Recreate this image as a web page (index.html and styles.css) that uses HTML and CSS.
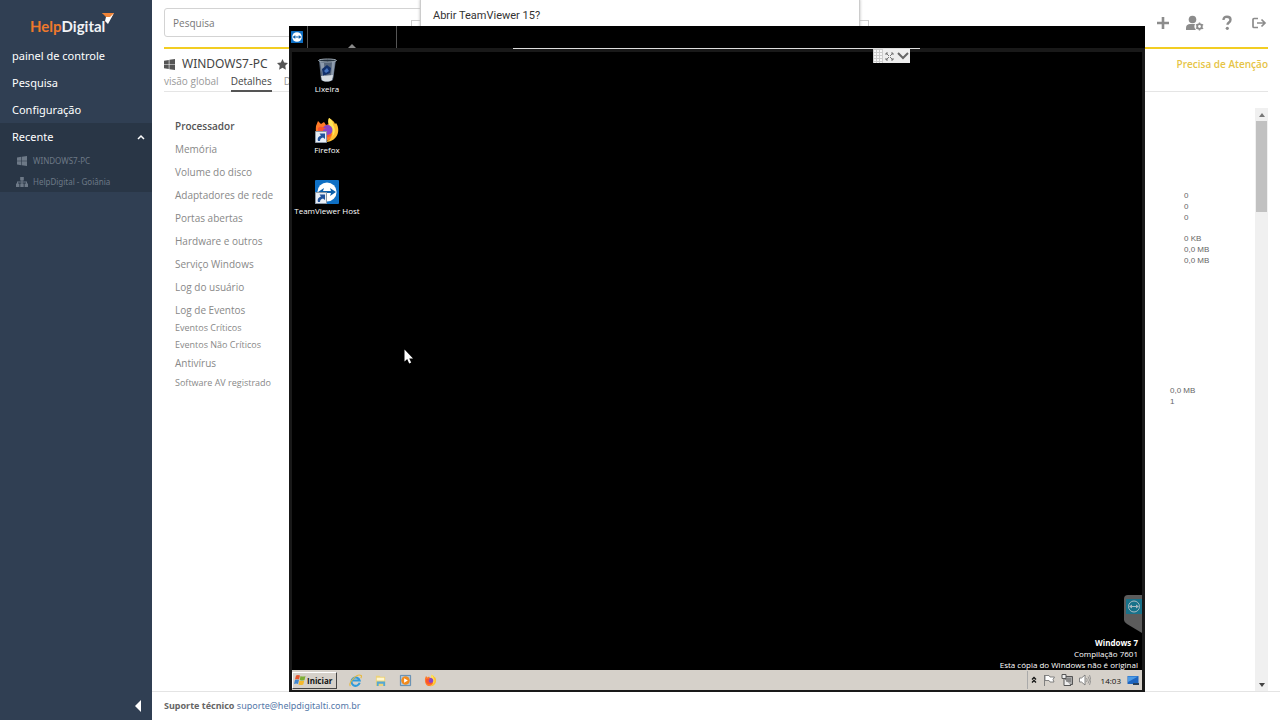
FILE: index.html
```html
<!DOCTYPE html>
<html lang="pt-BR">
<head>
<meta charset="utf-8">
<title>HelpDigital - WINDOWS7-PC</title>
<link rel="stylesheet" href="styles.css">
</head>
<body>
<svg class="defs" aria-hidden="true">
  <symbol id="win" viewBox="0 0 12 12"><path d="M0 1.8 5.2 1v4.7H0zM5.9.9 12 0v5.7H5.9zM0 6.4h5.2V11L0 10.2zM5.9 6.4H12V12l-6.1-.9z"/></symbol>
  <symbol id="tv" viewBox="0 0 24 24"><rect width="24" height="24" rx="1" fill="#0e6fc4"/><circle cx="12" cy="12" r="9.6" fill="#fff"/><path d="m3 12 6-4-1 3h8l-1-3 6 4-6 4 1-3H8l1 3z" fill="#0c5faa"/></symbol>
  <symbol id="firefox" viewBox="0 0 24 24"><path d="M1 8 3 3l3 3 3-2 2 3 3-1c3 2 6 5 5 9-2 6-7 9-11 8C3 22 0 16 1 8z" fill="#ff7a27"/><path d="M14 0c3 2 5 3 6 6l1-1c3 4 3 10 0 14-3 4-7 5-11 5 6-2 8-7 6-12-1-4-4-7-2-12z" fill="#ffbf32"/><path d="M14 0c3 2 4 4 4 7 3 4 2 9-1 12 3-6-2-9-3-12-1-2-1-5 0-7z" fill="#ffe55a"/><circle cx="12.500" cy="12" r="5" fill="#8a45c8"/><path d="M3 10c3-3 5 0 8 0l-3 2c0 5 5 6 9 4-3 5-12 5-14-1z" fill="#f9532f"/></symbol>
  <symbol id="shortcut" viewBox="0 0 12 12"><path d="M.5.500h11v11H.500z" fill="#e8eef5" stroke="#8c98a5"/><path d="M3 10c-1-3 1-5 3-5.500L4.500 2.500H10V8L8 6.500C6 7 5 8 5 10z" fill="#21539c"/></symbol>
</svg>
<div class="app">
  <aside class="sidebar">
    <div class="logo"><span class="logo-help">Help</span><span>Digital</span><svg class="logo-mark" viewBox="0 0 12 11"><path d="M0 0h12L9 5 4 4z" fill="#f08437"/><path d="m12 0-6 11-3-3 1-4 4 0z" fill="#fff"/><path d="M0 0h12L7 4z" fill="#f08437"/></svg></div>
    <nav class="nav">
      <a href="#">painel de controle</a>
      <a href="#">Pesquisa</a>
      <a href="#">Configuração</a>
      <div class="recent">
        <button class="recent-toggle" type="button">Recente<svg class="caret" viewBox="0 0 8 6"><path d="m1 5 3-3 3 3" fill="none" stroke="#fff" stroke-width="1.500"/></svg></button>
        <a class="recent-item" href="#"><svg><use href="#win"/></svg>WINDOWS7-PC</a>
        <a class="recent-item" href="#"><svg viewBox="0 0 12 10"><path d="M4.200 0h3.600v3.400H4.200zM0 6.600h3.400V10H0zm4.300 0h3.400V10H4.300zM8.600 6.600H12V10H8.600zM5.500 3h1v4h-1zM1 4.500h10V7h-1V5.500H2V7H1z"/></svg>HelpDigital - Goiânia</a>
      </div>
    </nav>
    <button class="collapse" type="button" aria-label="Recolher menu"><svg viewBox="0 0 6 12"><path d="M6 0v12L0 6z" fill="#fff"/></svg></button>
  </aside>
  <main class="main">
    <div class="page">
      <header class="topbar">
        <input class="search" type="text" placeholder="Pesquisa" aria-label="Pesquisa">
        <div class="tools">
          <button type="button" aria-label="Adicionar"><svg viewBox="0 0 18 16"><path d="M7.700 2h2.600v4.700H15v2.600h-4.700V14H7.700V9.300H3V6.700h4.700z"/></svg></button>
          <button type="button" aria-label="Usuários"><svg viewBox="0 0 18 16"><circle cx="6.500" cy="4.500" r="3.800"/><path d="M0 15v-2c0-3 2-4 4-4h5c-1 2-1 4 1 6z"/><circle cx="13.500" cy="11.500" r="2.300" fill="none" stroke="#8c8c8c" stroke-width="1.800"/><path d="M12.800 7.500h1.400v1.300h-1.400zm0 6.700h1.400v1.300h-1.400zM9.600 10l.7-1.100 1.100.7-.7 1.100zm6 3.600.7-1.100 1.200.7-.7 1.100zM9.600 13l1.100-.7.7 1.100-1.100.7zm6-3.500 1.200-.6.700 1.100-1.200.7z"/></svg></button>
          <button type="button" aria-label="Ajuda"><svg viewBox="0 0 18 16"><path d="M5.500 5C5.500 2.500 7 1.700 9 1.700s3.500 1 3.500 3c0 3-3 2.500-3 5" fill="none" stroke="#8c8c8c" stroke-width="2.400"/><circle cx="9.300" cy="13.300" r="1.600"/></svg></button>
          <button type="button" aria-label="Sair"><svg viewBox="0 0 18 16"><path d="M8 3.500H4q-1 0-1 1v7q0 1 1 1h4M7 8H15M11.500 4.500 15 8l-3.500 3.500" fill="none" stroke="#8c8c8c" stroke-width="1.700"/></svg></button>
        </div>
      </header>
      <section class="title-row">
        <svg><use href="#win"/></svg>
        <h1>WINDOWS7-PC</h1>
        <svg viewBox="0 0 12 12"><path d="m6 0 1.800 3.800 4.200.6-3 3 .7 4.200L6 9.600l-3.700 2 .7-4.200-3-3 4.200-.6z"/></svg>
        <span class="status">Precisa de Atenção</span>
      </section>
      <nav class="tabs"><a href="#">visão global</a><a class="active" href="#">Detalhes</a><a href="#">Disco</a></nav>
      <div class="content">
        <nav class="menu">
          <div class="menu-main">
            <a class="current" href="#">Processador</a><a href="#">Memória</a><a href="#">Volume do disco</a><a href="#">Adaptadores de rede</a><a href="#">Portas abertas</a><a href="#">Hardware e outros</a><a href="#">Serviço Windows</a><a href="#">Log do usuário</a><a href="#">Log de Eventos</a>
          </div>
          <div class="menu-events"><a href="#">Eventos Críticos</a><a href="#">Eventos Não Críticos</a></div>
          <div class="menu-av"><a class="regular" href="#">Antivírus</a><a href="#">Software AV registrado</a></div>
        </nav>
        <div class="values">
          <ul><li>0</li><li>0</li><li>0</li></ul>
          <ul><li>0 KB</li><li>0,0 MB</li><li>0,0 MB</li></ul>
          <ul class="totals"><li>0,0 MB</li><li>1</li></ul>
        </div>
        <div class="scrollbar">
          <button type="button" aria-label="Rolar para cima"><svg viewBox="0 0 6 4"><path d="m0 4 3-4 3 4z"/></svg></button>
          <div class="thumb"></div>
          <button class="down" type="button" aria-label="Rolar para baixo"><svg viewBox="0 0 6 4"><path d="m0 0 3 4 3-4z"/></svg></button>
        </div>
      </div>
    </div>
    <footer class="footer"><strong>Suporte técnico</strong> <a href="#">suporte@helpdigitalti.com.br</a></footer>
  </main>
</div>

<div class="dialog-back"></div>
<div class="dialog" role="dialog" aria-label="Abrir TeamViewer">Abrir TeamViewer 15?</div>

<section class="remote">
  <div class="remote-bar">
    <svg class="remote-logo"><use href="#tv"/></svg>
    <div class="remote-tab"><svg viewBox="0 0 8 4"><path d="m0 4 4-4 4 4z" fill="#8a8a8a"/></svg></div>
    <div class="session">
      <div class="session-tools">
        <svg viewBox="0 0 37 14"><path d="M0 0h10v14H0z" fill="#f6f6f6"/><path d="M1 .5h9M1 3.500h9M1 6.500h9M1 9.500h9M1 12.500h9M.5 0v14M3.500 0v14M6.500 0v14M9.500 0v14" stroke="#ccc"/><path d="m13 4 3 3m4-3-3 3m-4 4 3-3m4 3-3-3M13 6V4h2m3 0h2v2m0 3v2h-2m-3 0h-2V9" stroke="#777" fill="none"/><path d="m25 4 5 5 5-5" stroke="#666" stroke-width="2" fill="none"/></svg>
      </div>
    </div>
  </div>
  <div class="desktop">
    <div class="shortcuts">
      <button type="button"><svg viewBox="0 0 24 26"><path d="m4 3 2 20c3 2 9 2 12 0l3-20z" fill="#566579"/><path d="m5 5 3 16 2-1-1-14zm12 0-1 15 2 1 2-17z" fill="#8e9cae"/><path d="m7 12 5-4 4 3-1 5-7 3z" fill="#12306a"/><path d="m9 14 3-3 2 3-3 2z" fill="#4574c0"/><path d="m6 19 12-1-1 5c-3 2-8 2-10 0z" fill="#d7dde2"/><ellipse cx="12.500" cy="3.500" rx="9" ry="1.500" fill="#26323e" stroke="#9da9b4"/></svg>Lixeira</button>
      <button type="button"><svg viewBox="0 0 24 26"><use href="#firefox" width="24" height="24"/><use href="#shortcut" y="13" width="12" height="12"/></svg>Firefox</button>
      <button type="button"><svg viewBox="0 0 24 26"><use href="#tv" y="1" width="24" height="24"/><use href="#shortcut" y="13" width="12" height="12"/></svg>TeamViewer Host</button>
    </div>
    <svg class="pointer" viewBox="0 0 9 15"><path d="M.5.500v12l2.700-2.500 2 4.500 2-1-2-4H9z" fill="#fff"/></svg>
    <div class="edge">
      <svg class="side-tab" viewBox="0 0 18 38"><path d="M4 0h14v38L3 29q-3-2-3-4V4q0-4 4-4z" fill="#5c5c5c"/><path d="M2 4h16v15H2z" fill="#19728a"/><circle cx="10" cy="11.500" r="5.500" fill="none" stroke="#a9b9c0"/><path d="m5 11.500 3-2v1.500h4V9.500l3 2-3 2V12H8v1.500z" fill="#a9b9c0"/></svg>
      <div class="watermark"><strong>Windows 7</strong><span>Compilação 7601</span><span>Esta cópia do Windows não é original</span></div>
    </div>
  </div>
  <div class="taskbar">
    <button class="start" type="button"><svg viewBox="0 0 12 12"><path d="M2 1.500Q4 .5 6 1.500L5 5.500Q3 4.500 1 5.500z" fill="#e6552b"/><path d="M6.500 2Q9 3 11.500 2l-1 4Q8 7 5.700 6z" fill="#7dae35"/><path d="M1 6Q3 5 5 6l-1 4Q2 9 0 10z" fill="#3f86cf"/><path d="M5.500 6.500Q8 7.500 10.300 6.500l-1 4Q7 11.500 4.500 10.500z" fill="#f4b92b"/></svg>Iniciar</button>
    <div class="quick">
      <button type="button" aria-label="Internet Explorer"><svg viewBox="0 0 14 14"><path d="M11.500 9.500A4.500 4.500 0 1 1 11.500 7H4" fill="none" stroke="#2f9bdb" stroke-width="2.200"/><path d="M1.500 13C-1 10 8-1 13 1.500c1 .7.300 2-.3 3" fill="none" stroke="#e6b93f" stroke-width="1.200"/></svg></button>
      <button type="button" aria-label="Explorador"><svg viewBox="0 0 14 14"><path d="M2 2h4l1 1h5v10H2z" fill="#ecd27a"/><path d="M3 4h8v3H3z" fill="#fff7cf"/><path d="M3 13V8h9v5h-2v-2.500H5V13z" fill="#55a8d4"/></svg></button>
      <button type="button" aria-label="Media Player"><svg viewBox="0 0 14 14"><path d="M1.500 1.500h11v11h-11z" fill="#a9c7df" stroke="#5b87ad"/><circle cx="7" cy="7" r="4.600" fill="#f28a1c"/><path d="m5.500 4.500 4 2.500-4 2.500z" fill="#fff"/></svg></button>
      <button type="button" aria-label="Firefox"><svg viewBox="-1 -1 26 26"><use href="#firefox" width="24" height="24"/></svg></button>
    </div>
    <div class="tray">
      <svg class="tray-chevron" viewBox="0 0 6 8"><path d="m1 3.500 2-2 2 2m-4 3 2-2 2 2" fill="none" stroke="#111" stroke-width="1.300"/></svg>
      <svg viewBox="0 0 12 12"><path d="M1.500 1v11M2 1.500h4l1 1.500h4.500L10 5.500 11 8H7L6 6.500H2z" fill="#fff" stroke="#777" stroke-width=".9"/></svg>
      <svg viewBox="0 0 12 12"><path d="M4 2.500h7.500v8H4z" fill="#aaa" stroke="#555"/><path d="M1 .5h4v4H1zM3 4.500v7h7" fill="#eee" stroke="#555"/><path d="M5 5h5M5 7h5" stroke="#666"/></svg>
      <svg viewBox="0 0 12 12"><path d="M.5 4h2L6 1v10L2.500 8h-2z" fill="#fff" stroke="#777" stroke-width=".9"/><path d="M7.500 4q1.500 2 0 4M9 2.500q3 3.500 0 7M10.500 1q3 5 0 10" fill="none" stroke="#888" stroke-width=".8"/></svg>
      <time>14:03</time>
      <svg viewBox="0 0 12 12"><path d="M.5 2h11v8H.500z" fill="#1d65c0"/><path d="M1 2.500h10L1 8z" fill="#4d9be5"/><path d="M6 9h6v2H6z" fill="#28415c"/></svg>
    </div>
  </div>
</section>
</body>
</html>
```
FILE: styles.css
```css
* { box-sizing: border-box; }
body { margin: 0; min-height: 100vh; position: relative; overflow: hidden; background: #fff; color: #666; font: 10px/15px "Open Sans", "Noto Sans", sans-serif; }
a { color: inherit; text-decoration: none; }
button { margin: 0; padding: 0; border: 0; background: none; color: inherit; font: inherit; }
svg { display: block; flex: none; fill: currentColor; }
ul { margin: 0; padding: 0; list-style: none; }
.defs { position: absolute; width: 0; height: 0; }
.app { display: flex; min-height: 100vh; }

.sidebar { flex: none; width: 152px; display: flex; flex-direction: column; background: #303f53; color: #fff; font-family: "Noto Sans", sans-serif; }
.logo { height: 42px; padding: 16px 0 0 30px; display: flex; font: bold 15px/20px Lato, sans-serif; color: #f1f3f6; }
.logo-help { color: #ee792c; }
.logo-mark { width: 12px; height: 11px; margin: -3px 0 0 -3px; }
.nav { font-size: 11px; }
.nav > a { display: block; padding-left: 12px; line-height: 27px; }
.recent { background: #293646; }
.recent-toggle { display: flex; width: 100%; padding: 0 7px 0 12px; align-items: center; justify-content: space-between; line-height: 27px; }
.caret { width: 8px; height: 6px; }
.recent-item { display: flex; align-items: center; gap: 5px; padding-left: 16px; font-size: 8px; line-height: 21px; color: #6d7987; }
.recent-item svg { width: 12px; height: 10px; }
.collapse { margin: auto 11px 8px auto; }
.collapse svg { width: 6px; height: 12px; }

.main { flex: 1; display: flex; flex-direction: column; }
.page { flex: 1; display: flex; flex-direction: column; padding: 0 12px; }
.topbar { display: flex; align-items: center; justify-content: space-between; padding: 8px 0 10px; border-bottom: 2px solid #f2cd23; }
.search { width: 36%; height: 29px; padding: 0 8px; border: 1px solid #d3d3d3; border-radius: 3px; font: 10px "Open Sans", sans-serif; color: #666; }
.search::placeholder { color: #777; opacity: 1; }
.tools { display: flex; gap: 14px; color: #8c8c8c; }
.tools svg { width: 18px; height: 16px; }
.title-row { display: flex; align-items: center; gap: 7px; padding-top: 6px; }
.title-row svg { width: 11px; height: 11px; color: #555; }
h1 { margin: 0 2px 0 0; font: 12px/18px "Noto Sans", sans-serif; color: #444; }
.status { margin-left: auto; color: #e6c445; font-weight: 600; }
.tabs { display: flex; gap: 12px; height: 19px; border-bottom: 1px solid #e5e5e5; color: #999; line-height: 17px; }
.tabs .active { height: 19px; border-bottom: 2px solid #555; color: #444; }
.content { flex: 1; display: flex; margin-top: 16px; }
.menu { padding: 11px 0 0 11px; font-size: 9px; color: #888; }
.menu-main, .menu-events, .menu-av { display: flex; flex-direction: column; }
.menu-main { gap: 8px; font-size: 10px; }
.menu-events { margin-top: 2px; gap: 2px; }
.menu-av { margin-top: 4px; gap: 4px; }
.regular { font-size: 10px; }
.current { font-weight: 600; color: #555; }
.values { width: 85px; margin-left: auto; padding-top: 82px; font: 8px/11px "Liberation Sans", sans-serif; color: #666; }
.values ul { margin: 0 0 10px 14px; }
.values .totals { margin: 119px 0 0; }
.scrollbar { width: 13px; display: flex; flex-direction: column; align-items: center; background: #f0f0f0; color: #777; }
.scrollbar button { height: 13px; }
.scrollbar svg { width: 6px; height: 4px; }
.thumb { width: 11px; height: 91px; background: #c1c1c1; }
.scrollbar .down { margin-top: auto; color: #444; }
.footer { padding: 6px 12px 7px; border-top: 1px solid #e4e4e4; font-family: "Noto Sans", sans-serif; font-size: 9px; }
.footer a { color: #5478a8; }

.dialog-back, .dialog { position: absolute; border: 1px solid #ccc; background: #fff; }
.dialog-back { top: 20px; left: 411px; right: 411px; height: 16px; }
.dialog { top: -1px; left: 420px; right: 420px; height: 40px; padding: 8px 12px; box-shadow: 0 0 3px #bbb; font: 11px/16px Roboto, sans-serif; color: #333; }

.remote { position: absolute; top: 26px; right: 135px; bottom: 28px; left: 289px; display: flex; flex-direction: column; border: solid #191919; border-width: 0 3px 2px; background: #000; color: #fff; font: 8px/11px "Open Sans", sans-serif; }
.remote-bar { position: relative; display: flex; height: 26px; margin: 0 -3px; padding-left: 2px; border-bottom: 4px solid #191919; background: #000; }
.remote-logo { width: 12px; height: 12px; margin-top: 5px; }
.remote-tab { display: flex; align-items: flex-end; justify-content: center; width: 90px; margin-left: 4px; border: solid #555; border-width: 0 1px; }
.remote-tab svg { width: 8px; height: 4px; }
.session { position: absolute; top: 22px; left: 50%; width: 407px; margin-left: -204px; border-top: 1px solid #ddd; }
.session-tools { width: 37px; height: 14px; margin: 0 10px 0 auto; background: #eee; }
.desktop { position: relative; flex: 1; display: flex; justify-content: space-between; }
.shortcuts { display: flex; flex-direction: column; gap: 18px; padding-top: 5px; }
.shortcuts button { display: flex; flex-direction: column; align-items: center; width: 70px; height: 43px; white-space: nowrap; }
.shortcuts svg { width: 24px; height: 26px; }
.pointer { position: absolute; left: 112px; top: 297px; width: 9px; height: 15px; }
.edge { display: flex; flex-direction: column; align-items: flex-end; justify-content: flex-end; }
.side-tab { width: 18px; height: 38px; margin-bottom: 4px; }
.watermark { display: flex; flex-direction: column; align-items: flex-end; padding-right: 4px; }
.taskbar { display: flex; align-items: center; height: 20px; background: #d6d1ca; color: #111; }
.start { display: flex; align-items: center; gap: 1px; min-width: 45px; height: 17px; padding: 0 1px; border: 1px solid; border-color: #fff #444 #444 #fff; font-weight: bold; }
.start svg { width: 12px; height: 12px; }
.quick { display: flex; gap: 12px; margin-left: 12px; }
.quick svg { width: 13px; height: 13px; }
.tray { display: flex; align-items: center; gap: 6px; height: 18px; margin-left: auto; padding: 0 3px; border-left: 1px solid #aaa; }
.tray svg { width: 12px; height: 12px; }
.tray .tray-chevron { width: 6px; height: 8px; }
.tray time { margin-left: 4px; }
```
